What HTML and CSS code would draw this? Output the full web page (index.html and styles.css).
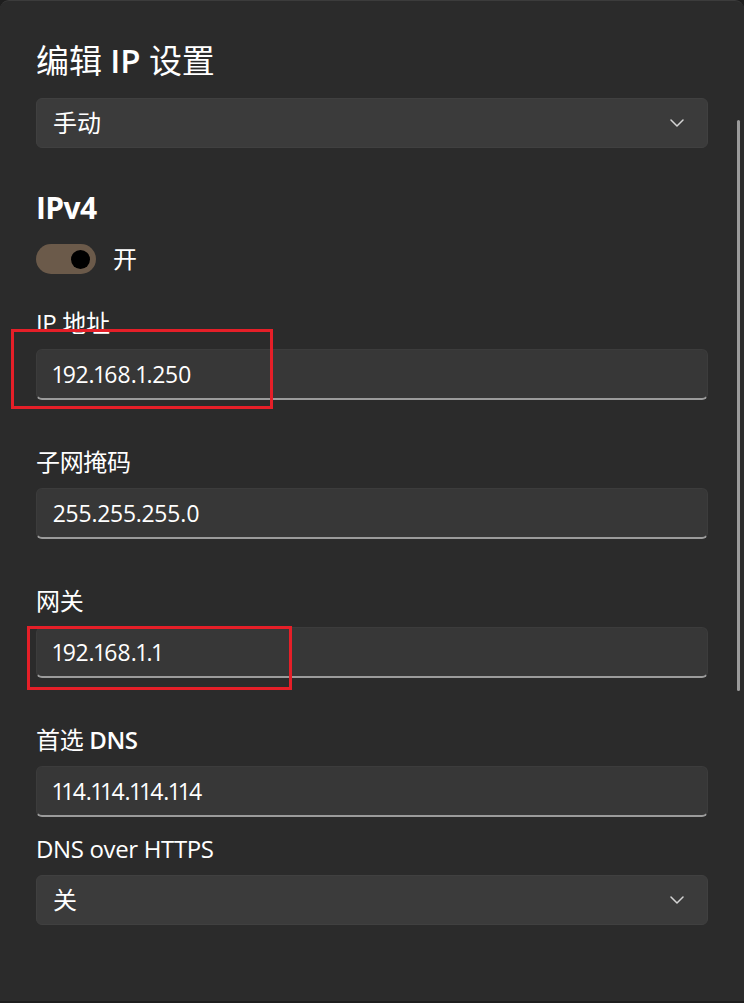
FILE: index.html
```html
<!DOCTYPE html>
<html lang="zh-CN">
<head>
<meta charset="utf-8">
<title>编辑 IP 设置</title>
<link rel="stylesheet" href="styles.css">
</head>
<body>
<div class="window">
  <div class="content">
    <h1 class="title">编辑 <span class="strong">IP</span> 设置</h1>
    <div class="select">
      <span class="select-text">手动</span>
      <svg class="chevron" width="14" height="8" viewBox="0 0 14 8"><polyline points="1,1 7,7 13,1" fill="none" stroke="#d4d4d4" stroke-width="1.5" stroke-linecap="round" stroke-linejoin="round"/></svg>
    </div>
    <h2 class="section">IPv4</h2>
    <div class="toggle-row">
      <span class="toggle"><span class="knob"></span></span>
      <span class="toggle-label">开</span>
    </div>
    <div class="field first">
      <div class="label">IP 地址</div>
      <div class="input">192.168.1.250</div>
    </div>
    <div class="field">
      <div class="label">子网掩码</div>
      <div class="input">255.255.255.0</div>
    </div>
    <div class="field">
      <div class="label">网关</div>
      <div class="input">192.168.1.1</div>
    </div>
    <div class="field">
      <div class="label">首选 <span class="strong">DNS</span></div>
      <div class="input">114.114.114.114</div>
    </div>
    <div class="field tight">
      <div class="label">DNS over HTTPS</div>
      <div class="select">
        <span class="select-text">关</span>
        <svg class="chevron" width="14" height="8" viewBox="0 0 14 8"><polyline points="1,1 7,7 13,1" fill="none" stroke="#d4d4d4" stroke-width="1.5" stroke-linecap="round" stroke-linejoin="round"/></svg>
      </div>
    </div>
  </div>
  <div class="scrollbar"></div>
  <div class="mark mark-ip"></div>
  <div class="mark mark-gw"></div>
</div>
</body>
</html>
```
FILE: styles.css
```css
html, body {
  margin: 0;
  padding: 0;
  background: #1e1e1e;
}
body {
  width: 744px;
  height: 1003px;
  overflow: hidden;
  font-family: "Open Sans", "Noto Sans CJK SC", sans-serif;
  color: #ffffff;
}
.window {
  position: relative;
  height: 1001px;
  background: #2b2b2b;
  border-top-left-radius: 9px;
  border-top-right-radius: 9px;
  box-sizing: border-box;
  border-top: 1px solid #3c3c3c;
}
.content {
  padding: 38px 36px 0 36px;
}
.title {
  margin: 0;
  height: 44px;
  font-size: 33px;
  line-height: 44px;
  font-weight: 400;
  letter-spacing: -0.1px;
}
.select {
  margin-top: 15px;
  height: 50px;
  box-sizing: border-box;
  background: #3b3b3b;
  border: 1px solid #404040;
  border-radius: 6px;
  display: flex;
  align-items: center;
  justify-content: space-between;
  padding: 0 23px 0 16px;
}
.select-text {
  font-size: 24px;
  line-height: 32px;
}
.chevron {
  display: block;
}
.section {
  margin: 38px 0 0 0;
  height: 44px;
  font-size: 30px;
  line-height: 44px;
  font-weight: 700;
  letter-spacing: -0.6px;
}
.toggle-row {
  margin-top: 14px;
  height: 30px;
  display: flex;
  align-items: center;
  gap: 17px;
}
.toggle {
  width: 60px;
  height: 30px;
  box-sizing: border-box;
  border-radius: 15px;
  background: #6b5a4a;
  display: flex;
  align-items: center;
  justify-content: flex-end;
  padding-right: 6px;
}
.knob {
  width: 19px;
  height: 19px;
  border-radius: 50%;
  background: #000000;
}
.toggle-label {
  font-size: 24px;
  line-height: 30px;
}
.field {
  margin-top: 46px;
}
.field.first {
  margin-top: 33px;
}
.field.tight {
  margin-top: 16px;
}
.field .select {
  margin-top: 10px;
}
.label {
  height: 32px;
  font-size: 24px;
  line-height: 32px;
  letter-spacing: -0.35px;
}
.strong {
  font-weight: 600;
}
.input {
  margin-top: 10px;
  height: 51px;
  box-sizing: border-box;
  background: #373737;
  border: 1px solid #3c3c3c;
  border-bottom: 2px solid #9b9b9b;
  border-radius: 6px;
  padding-left: 16px;
  display: flex;
  align-items: center;
  font-size: 23px;
  font-variant-numeric: proportional-nums;
  letter-spacing: -0.1px;
}
.scrollbar {
  position: absolute;
  left: 737px;
  top: 119px;
  width: 2.5px;
  height: 571px;
  border-radius: 2px;
  background: #9b9b9b;
}
.mark {
  position: absolute;
  box-sizing: border-box;
  border: 3px solid #e51f28;
}
.mark-ip {
  left: 11px;
  top: 328px;
  width: 262px;
  height: 80px;
}
.mark-gw {
  left: 27px;
  top: 625px;
  width: 265px;
  height: 64px;
}
```
